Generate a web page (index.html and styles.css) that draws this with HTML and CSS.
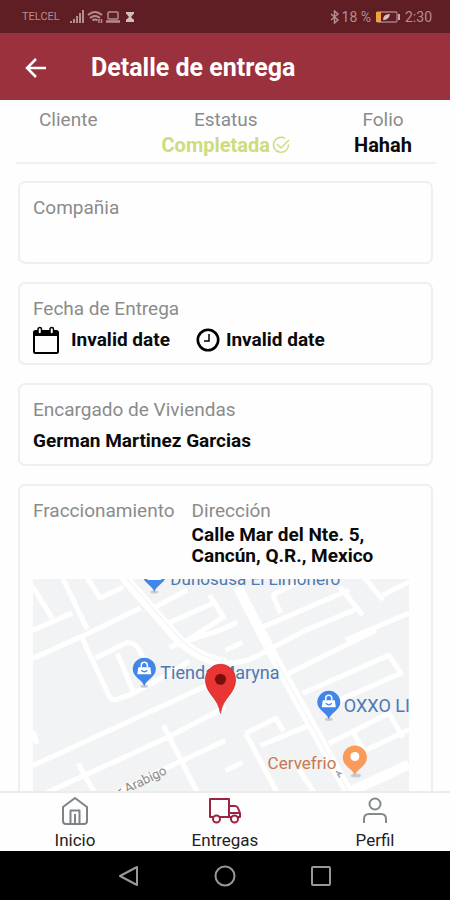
FILE: index.html
```html
<!DOCTYPE html>
<html lang="es">
<head>
<meta charset="utf-8">
<meta name="viewport" content="width=device-width, initial-scale=1">
<title>Detalle de entrega</title>
<link rel="stylesheet" href="styles.css">
</head>
<body>
<div class="status-bar">
  <div class="status-group">
    <span class="carrier">TELCEL</span>
    <svg width="16" height="14" viewBox="0 0 16 14" fill="currentColor" aria-hidden="true"><path d="M1 11h2v2H1zM4 9h2v4H4zM7 6h2v7H7zM10 3h2v10h-2zM13 0h2v13h-2z"/></svg>
    <svg width="16" height="14" viewBox="0 0 16 14" fill="none" stroke="currentColor" stroke-width="2" aria-hidden="true"><path d="M1 5q7-6 14 0M3 8q5-4 10 0M5.500 10.500q2.500-2 5 0"/><path d="M12 9v4M14.500 9v4" stroke-width="1.500"/></svg>
    <svg width="16" height="14" viewBox="0 0 16 14" fill="none" stroke="currentColor" stroke-width="1.500" aria-hidden="true"><rect x="3" y="2" width="10" height="7" rx="1"/><path d="M1 11.500h14" stroke-width="2.500"/></svg>
    <svg class="hourglass" width="10" height="14" viewBox="0 0 10 14" fill="currentColor" aria-hidden="true"><path d="M1 2h8v2H8.500L6 7l2.500 2.500H9V12H1V9.500h.5L4 7 1.500 4H1z"/></svg>
  </div>
  <div class="status-group">
    <svg width="10" height="14" viewBox="0 0 10 14" fill="none" stroke="currentColor" stroke-width="1.500" aria-hidden="true"><path d="M1 4l7 6-3.500 3V1L8 4l-7 6"/></svg>
    <span>18 %</span>
    <svg class="battery" width="26" height="12" viewBox="0 0 26 12" aria-hidden="true"><rect x="2" y="1" width="20" height="10" rx="1" fill="none" stroke="#a87d80" stroke-width="1.300"/><path d="M1 1h5v10H1z" fill="#f0a040"/><path d="M8 9q0-6 7-6-1 6-7 6z" fill="#d9bfc1"/><path d="M23 3h2v6h-2z" fill="#c9a4a7"/></svg>
    <span>2:30</span>
  </div>
</div>

<header class="app-bar">
  <button class="back" type="button" aria-label="Regresar">
    <svg width="24" height="24" viewBox="0 0 24 24" fill="none" stroke="currentColor" stroke-width="2.500" aria-hidden="true"><path d="M22 12H4M12 3l-9 9 9 9"/></svg>
  </button>
  <h1>Detalle de entrega</h1>
</header>

<main>
  <section class="summary">
    <div><span class="label">Cliente</span></div>
    <div>
      <span class="label">Estatus</span>
      <span class="value done">Completada
        <svg width="18" height="18" viewBox="0 0 18 18" fill="none" stroke="currentColor" stroke-width="1.500" aria-hidden="true"><path d="M13 2.500A7.500 7.500 0 1 0 16.500 8.500M5 8l4 4 8-8"/></svg>
      </span>
    </div>
    <div><span class="label">Folio</span><span class="value">Hahah</span></div>
  </section>

  <div class="cards">
    <section class="card"><span class="label">Compañia</span></section>

    <section class="card">
      <span class="label">Fecha de Entrega</span>
      <div class="dates">
        <span class="value date">
          <svg width="26" height="28" viewBox="0 0 26 28" aria-hidden="true"><rect x="1" y="5" width="24" height="22" rx="1.500" fill="none" stroke="#000" stroke-width="2"/><path d="M1 5h24v5H1z"/><g fill="#fff" stroke="#000" stroke-width="1.500"><rect x="5" y="1.500" width="3.500" height="6.500" rx="1.700"/><rect x="17" y="1.500" width="3.500" height="6.500" rx="1.700"/></g></svg>
          Invalid date
        </span>
        <span class="value time">
          <svg width="24" height="24" viewBox="0 0 24 24" fill="none" stroke="#000" aria-hidden="true"><circle cx="12" cy="12" r="10.200" stroke-width="2.600"/><path d="M13 6v7H8" stroke-width="1.500"/></svg>
          Invalid date
        </span>
      </div>
    </section>

    <section class="card">
      <span class="label">Encargado de Viviendas</span>
      <span class="value spaced">German Martinez Garcias</span>
    </section>

    <section class="card">
      <div class="place">
        <span class="label">Fraccionamiento</span>
        <div>
          <span class="label">Dirección</span>
          <span class="value address">Calle Mar del Nte. 5, Cancún, Q.R., Mexico</span>
        </div>
      </div>
      <svg class="map" viewBox="0 0 375 300" role="img" aria-label="Mapa de la entrega">
        <defs>
          <g id="shop">
            <ellipse cx="0" cy="17" rx="4" ry="1.500" fill="#c9ccd0"/>
            <path d="M0 17C-2 10-11.500 8-11.500 0a11.500 11.500 0 1 1 23 0C11.500 8 2 10 0 17z" fill="#4285e8"/>
            <path d="M-6-2H6l1 7H-7z" fill="#fff"/>
            <path d="M-3-2v-2a3 3 0 0 1 6 0v2" fill="none" stroke="#fff" stroke-width="1.500"/>
            <path d="M-3 1q3 3 6 0" fill="none" stroke="#4285e8" stroke-width="1.300"/>
          </g>
        </defs>
        <rect width="375" height="300" fill="#f1f3f4"/>
        <g class="roads">
          <path d="M0 8l19 31M30 0l24 50M0 51l39-17M54-1l13 20 23-11M0 79l47-21 60-29M120 29l34-18M135 44l45-20M176 16l14 22-36 23-18 7"/>
          <path d="M49 59l27 58q3 5 8 3l16-6 40-22 16-10M62 79l30-15q8-2 13 5l8 15M84 74l16 38M150 63l37-12 17-8"/>
          <path d="M0 186l170-78 22-10M14 213l120-55 58-30M130 146l34 67M45 184l19 34M80 215l54-27 58-27M0 152l4 12M192 191l17-8"/>
          <path d="M192 84q20 0 33-8l47-25 53-22M192 71l17-8M229 48l86-37M239 16l8 18M239 16l33-17M306 8l23 28M312 61l63-27M330-2l19 23M349 16l26-13"/>
          <path d="M255 94l87-43M269 114l86-38 12 18-78 34M212 154l30-15 8 13M212 154l33 62M227 166l48-20M295 164l60-30 14 24M325 174l50-24M320 154l10 18M265 190l17 25"/>
        </g>
        <g class="avenues">
          <path d="M90-2l46 52q22 28 56 34M204 8l38 73 73 132M310 215l65-30"/>
        </g>
        <path class="median" d="M92-2l46 52q22 28 54 33M242 81l73 132"/>
        <text class="street" transform="translate(87 217) rotate(-26)">r Arabigo</text>
        <g class="shops"><text class="small" x="137" y="6">Dunosusa El Limonero</text><text x="127" y="100">Tienda Maryna</text><text x="310" y="133">OXXO LI</text></g>
        <text class="bar small" x="234" y="189">Cervefrio</text>
        <use href="#shop" x="121" y="-4"/><use href="#shop" x="111" y="90"/><use href="#shop" x="295" y="123"/>
        <ellipse cx="322" cy="196" rx="5" ry="2" fill="#c9ccd0"/>
        <path d="M321 196c-2-7-12-9-12-18a12 12 0 1 1 24 0c0 9-10 11-12 18z" fill="#fa9b5b"/><circle cx="321" cy="177" r="4.500" fill="#fff"/>
        <path d="M187 134c-2-16-15-19-15-34a15 15 0 1 1 30 0c0 15-13 18-15 34z" fill="#ea3535" stroke="#c92a2a" stroke-width=".8"/><circle cx="187" cy="100" r="5.500" fill="#7c0d0d"/>
        <path d="M302 192l5 2-3 1 2 3" fill="none" stroke="#a5a8ba" stroke-width="1.500"/>
      </svg>
    </section>
  </div>
</main>

<nav class="tabs">
  <a href="#inicio">
    <svg width="28" height="28" viewBox="0 0 28 28" fill="none" stroke="#7d8488" stroke-width="2" stroke-linejoin="round" aria-hidden="true"><path d="M2 10L14 1l12 9v14q0 3-3 3H5q-3 0-3-3z"/><path d="M9.500 27V13.500h9V27M14 17v10"/></svg>
    Inicio
  </a>
  <a href="#entregas" aria-current="page">
    <svg width="32" height="28" viewBox="0 0 32 28" fill="none" stroke="#9c2440" stroke-width="2" stroke-linejoin="round" aria-hidden="true"><path d="M4 20H1V2h19v18h-9M20 9h6q2 0 3 2l2 5v4h-2M22 20h-2M20 16h11"/><circle cx="7.500" cy="22" r="3.500"/><circle cx="25.500" cy="22" r="3.500"/></svg>
    Entregas
  </a>
  <a href="#perfil">
    <svg width="26" height="28" viewBox="0 0 26 28" fill="none" stroke="#85898b" stroke-width="2" aria-hidden="true"><circle cx="13" cy="7" r="5.500"/><path d="M2 26v-4q0-5 5-5h12q5 0 5 5v4"/></svg>
    Perfil
  </a>
</nav>

<div class="system-bar">
  <button type="button" aria-label="Atrás"><svg width="22" height="22" viewBox="0 0 22 22"><path d="M19 2v18L2 11z"/></svg></button>
  <button type="button" aria-label="Pantalla de inicio"><svg width="22" height="22" viewBox="0 0 22 22"><circle cx="11" cy="11" r="9.500"/></svg></button>
  <button type="button" aria-label="Recientes"><svg width="22" height="22" viewBox="0 0 22 22"><rect x="2" y="2" width="18" height="18" rx="1"/></svg></button>
</div>
</body>
</html>
```
FILE: styles.css
```css
* { box-sizing: border-box; }

body {
  margin: 0;
  height: 100vh;
  display: flex;
  flex-direction: column;
  background: #fefefe;
  color: #0a0a0a;
  font-family: Roboto, "Liberation Sans", sans-serif;
}

svg { display: block; flex: none; }

button { padding: 0; border: 0; background: none; color: inherit; }

.status-bar {
  flex: none;
  height: 33px;
  padding: 0 18px 0 22px;
  display: flex;
  align-items: center;
  justify-content: space-between;
  background: #5f1d24;
  color: #b58d90;
  font-size: 14px;
}

.status-group { display: flex; align-items: center; gap: 2px; }
.carrier { margin-right: 7px; font-size: 11px; }
.hourglass { margin-left: 2px; color: #d5bcbe; }
.battery { margin: 0 2px; }

.app-bar {
  flex: none;
  height: 67px;
  padding: 2px 24px 0;
  display: flex;
  align-items: center;
  gap: 43px;
  background: #9b313c;
  color: #fff;
}

h1 { margin: 0; font-size: 25px; line-height: 32px; font-weight: 700; }

main {
  flex: 1;
  min-height: 0;
  overflow-y: auto;
  scrollbar-width: none;
}

.label, .value { display: block; font-size: 19px; line-height: 24px; }
.label { color: #8b8b8b; }
.value { font-weight: 700; }

.summary {
  height: 64px;
  margin: 0 14px 0 16px;
  padding: 8px 24px 0 23px;
  display: flex;
  justify-content: space-between;
  border-bottom: 2px solid #f0f0f0;
  text-align: center;
}

.summary .value { margin-top: 1px; font-size: 20px; }
.summary .done { display: flex; align-items: center; gap: 2px; color: #cddc7c; }

.cards {
  padding: 17px 17px 18px 18px;
  display: grid;
  gap: 18px;
}

.card {
  min-height: 83px;
  padding: 13px 13px 9px;
  border: 2px solid #eeefef;
  border-radius: 7px;
}

.dates { display: flex; align-items: center; gap: 26px; margin-top: 5px; }
.date, .time { display: flex; align-items: center; }
.date { gap: 12px; }
.time { gap: 6px; }
.spaced { margin-top: 7px; }

.place { display: flex; gap: 17px; }
.address { max-width: 200px; margin-top: 1px; line-height: 21px; }

.map { width: calc(100% - 9px); height: auto; margin-top: 13px; overflow: hidden; }
.roads, .avenues { fill: none; stroke: #fff; stroke-width: 5px; stroke-linejoin: round; }
.avenues { stroke-width: 10px; }
.median { fill: none; stroke: #f1f3f4; stroke-width: 1px; }
.shops { font-size: 18px; fill: #5078b0; }
.bar { fill: #c77850; }
.small { font-size: 17px; }
.street { font-size: 13px; fill: #8b8b8b; }

.tabs {
  flex: none;
  height: 60px;
  display: grid;
  grid-template-columns: repeat(3, 1fr);
  border-top: 2px solid #ececec;
}

.tabs a {
  display: flex;
  flex-direction: column;
  align-items: center;
  padding-top: 4px;
  gap: 4px;
  color: #222;
  font-size: 17px;
  line-height: 22px;
  text-decoration: none;
}

.system-bar {
  flex: none;
  height: 49px;
  display: flex;
  align-items: center;
  justify-content: center;
  gap: 74px;
  background: #000;
}

.system-bar svg { fill: none; stroke: #999; stroke-width: 2px; stroke-linejoin: round; }
```
